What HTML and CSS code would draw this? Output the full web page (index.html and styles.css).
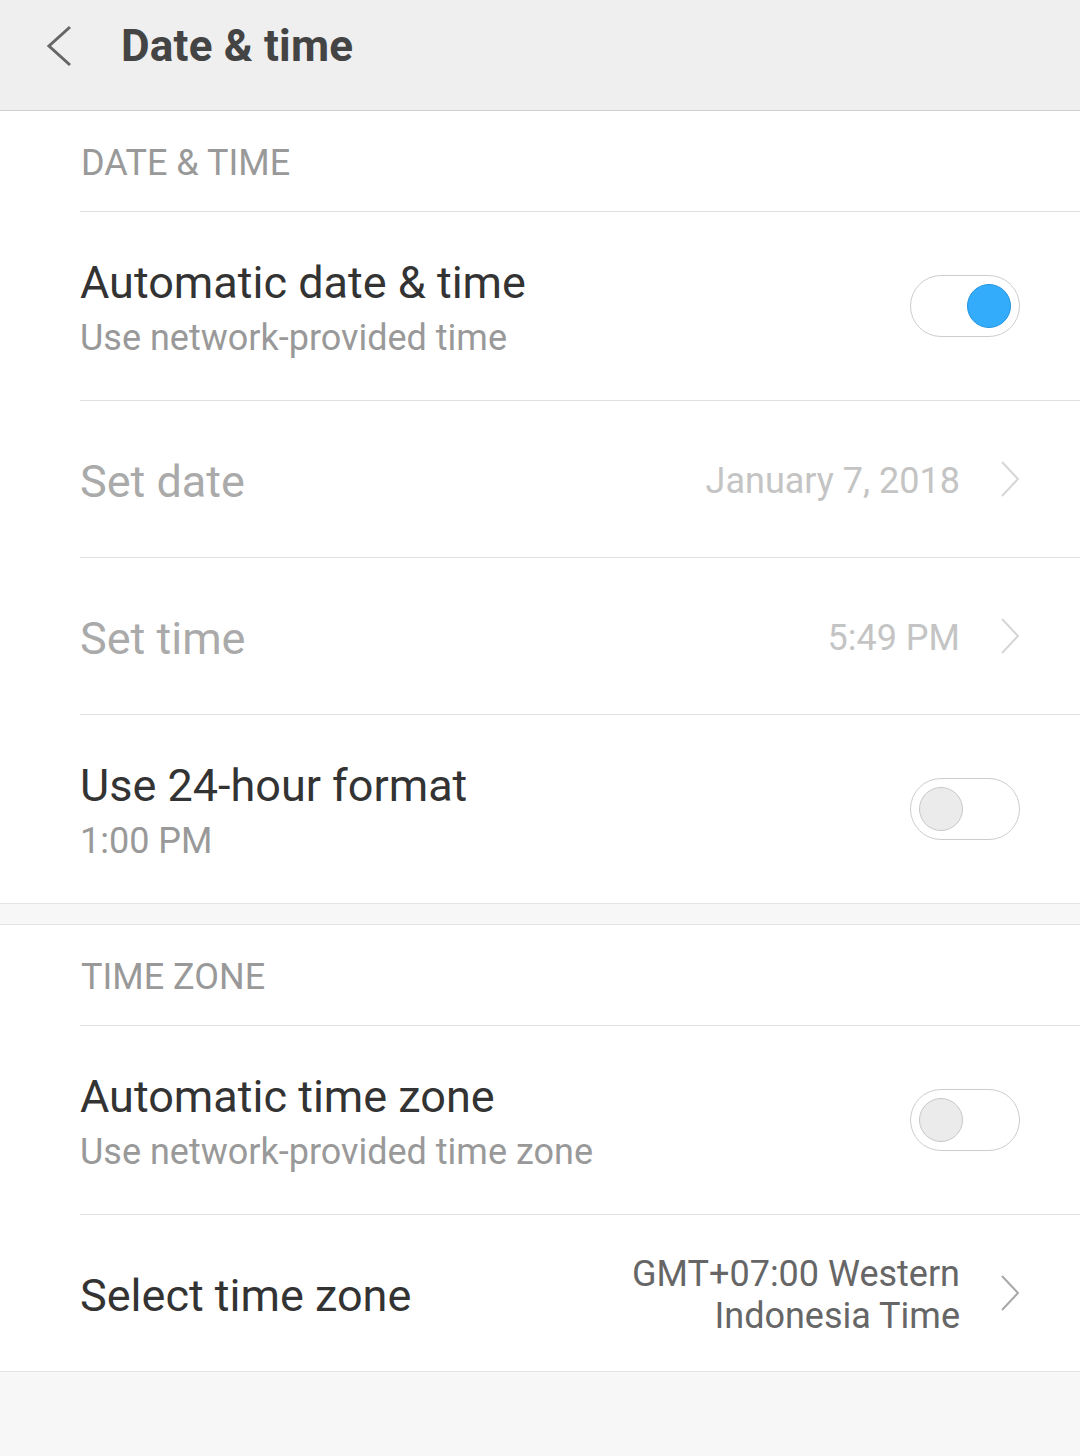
FILE: index.html
```html
<!DOCTYPE html>
<html lang="en">
<head>
    <meta charset="UTF-8">
    <meta name="viewport" content="width=device-width, initial-scale=1.0">
    <title>Date &amp; time</title>
    <link rel="stylesheet" href="styles.css">
</head>
<body>
    <div class='topbar'>
        <span class='back'>
            <svg width="30" height="44" viewBox="0 0 30 44"><polyline points="24,3 3,22 24,41" fill="none" stroke="#666" stroke-width="3"/></svg>
        </span>
        <h1 class='page-title'>Date &amp; time</h1>
    </div>

    <div class='group'>
        <div class='group-title'>DATE &amp; TIME</div>

        <div class='row row-two'>
            <div class='text'>
                <div class='label'>Automatic date &amp; time</div>
                <div class='sub'>Use network-provided time</div>
            </div>
            <span class='switch on'><span class='knob'></span></span>
        </div>

        <div class='row disabled'>
            <div class='text'>
                <div class='label'>Set date</div>
            </div>
            <div class='value'>January 7, 2018</div>
            <svg class='chev' width="20" height="36" viewBox="0 0 20 36"><polyline points="2,1 18,18 2,35" fill="none" stroke="#d6d6d6" stroke-width="2"/></svg>
        </div>

        <div class='row disabled'>
            <div class='text'>
                <div class='label'>Set time</div>
            </div>
            <div class='value'>5:49 PM</div>
            <svg class='chev' width="20" height="36" viewBox="0 0 20 36"><polyline points="2,1 18,18 2,35" fill="none" stroke="#d6d6d6" stroke-width="2"/></svg>
        </div>

        <div class='row row-two'>
            <div class='text'>
                <div class='label'>Use 24-hour format</div>
                <div class='sub'>1:00 PM</div>
            </div>
            <span class='switch'><span class='knob'></span></span>
        </div>
    </div>

    <div class='group'>
        <div class='group-title'>TIME ZONE</div>

        <div class='row row-two'>
            <div class='text'>
                <div class='label'>Automatic time zone</div>
                <div class='sub'>Use network-provided time zone</div>
            </div>
            <span class='switch'><span class='knob'></span></span>
        </div>

        <div class='row'>
            <div class='text'>
                <div class='label'>Select time zone</div>
            </div>
            <div class='value'>GMT+07:00 Western<br>Indonesia Time</div>
            <svg class='chev' width="20" height="36" viewBox="0 0 20 36"><polyline points="2,1 18,18 2,35" fill="none" stroke="#a8a8a8" stroke-width="2"/></svg>
        </div>
    </div>
</body>
</html>
```

FILE: styles.css
```css
*{
    margin: 0;
    padding: 0;
    box-sizing: border-box;
}
body{
    font-family: Roboto, "Noto Sans", Arial, sans-serif;
    background-color: #f7f7f7;
    width: 1080px;
    min-height: 1456px;
}
.topbar{
    display: flex;
    align-items: center;
    height: 111px;
    background-color: #efefef;
    border-bottom: 1px solid #cfcfcf;
    padding-left: 46px;
    padding-bottom: 18px;
}
.back{
    display: flex;
    width: 75px;
}
.page-title{
    font-size: 44px;
    font-weight: bold;
    color: #444;
    letter-spacing: 0.2px;
}
.group{
    background-color: #fff;
    border-bottom: 1px solid #e4e4e4;
    margin-bottom: 20px;
}
.group + .group{
    border-top: 1px solid #e4e4e4;
}
.group-title{
    height: 100px;
    padding: 5px 0 0 81px;
    line-height: 95px;
    font-size: 36px;
    color: #999;
}
.row{
    display: flex;
    align-items: center;
    margin-left: 80px;
    padding-right: 60px;
    border-top: 1px solid #e0e0e0;
    height: 157px;
}
.row-two{
    height: 189px;
}
.text{
    flex: 1;
    padding-top: 5px;
}
.label{
    font-size: 45px;
    line-height: 56px;
    color: #333;
}
.sub{
    font-size: 36px;
    line-height: 48px;
    margin-top: 3px;
    color: #999;
}
.disabled .label{
    color: #aaa;
}
.value{
    font-size: 36px;
    line-height: 42px;
    color: #666;
    text-align: right;
    margin-right: 40px;
    padding-top: 4px;
}
.disabled .value{
    color: #c4c4c4;
}
.chev{
    display: block;
}
.switch{
    display: flex;
    align-items: center;
    width: 110px;
    height: 62px;
    padding: 0 8px;
    border: 1px solid #cdcdcd;
    border-radius: 31px;
    background-color: #fff;
}
.knob{
    width: 44px;
    height: 44px;
    border-radius: 50%;
    background-color: #ebebeb;
    border: 1px solid #c8c8c8;
}
.switch.on{
    justify-content: flex-end;
}
.switch.on .knob{
    background-color: #33acfc;
    border-color: #2595e0;
}
```
